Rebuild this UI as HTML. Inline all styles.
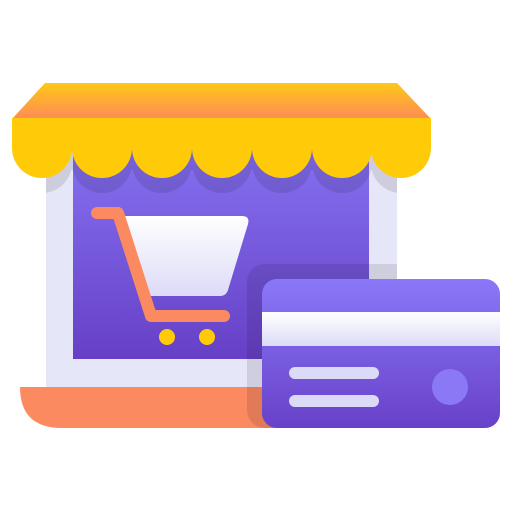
<!DOCTYPE html>
<html><head><style>html,body{margin:0;padding:0;background:#fff;width:512px;height:512px;overflow:hidden}</style></head>
<body>
<svg width="512" height="512" viewBox="0 0 512 512" xmlns="http://www.w3.org/2000/svg">
<defs>
<linearGradient id="aw" x1="0" y1="0" x2="0" y2="1"><stop offset="0" stop-color="#ffc815"/><stop offset="1" stop-color="#fd8b58"/></linearGradient>
<linearGradient id="scr" x1="0" y1="0" x2="0" y2="1"><stop offset="0" stop-color="#8570f0"/><stop offset="1" stop-color="#6640c6"/></linearGradient>
<linearGradient id="card" x1="0" y1="0" x2="0" y2="1"><stop offset="0" stop-color="#8a78f8"/><stop offset="1" stop-color="#6841c8"/></linearGradient>
<linearGradient id="wh" x1="0" y1="0" x2="0" y2="1"><stop offset="0" stop-color="#ffffff"/><stop offset="1" stop-color="#dcdbf7"/></linearGradient>
<clipPath id="fr"><rect x="0" y="150" width="397" height="290"/></clipPath>
</defs>
<rect x="46" y="150" width="351" height="237" fill="#e6e6f9"/>
<rect x="73" y="150" width="296" height="209" fill="url(#scr)"/>
<g fill="#000" opacity="0.1">
<rect x="46" y="150" width="351" height="20"/>
<circle cx="42" cy="163" r="30"/><circle cx="102" cy="163" r="30"/><circle cx="162" cy="163" r="30"/><circle cx="222" cy="163" r="30"/><circle cx="282" cy="163" r="30"/><circle cx="342" cy="163" r="30"/><circle cx="401" cy="163" r="30"/>
</g>
<rect x="0" y="150" width="46" height="50" fill="#fff"/>
<rect x="397" y="150" width="60" height="50" fill="#fff"/>
<path d="M45 83 H397 L431 119 H12 Z" fill="url(#aw)"/>
<rect x="12" y="118" width="419" height="32" fill="#ffcb08"/>
<g fill="#ffcb08">
<circle cx="42" cy="148" r="30"/><circle cx="102" cy="148" r="30"/><circle cx="162" cy="148" r="30"/><circle cx="222" cy="148" r="30"/><circle cx="282" cy="148" r="30"/><circle cx="342" cy="148" r="30"/><circle cx="401" cy="148" r="30"/>
</g>
<path d="M127 216 H242 Q250 216 248 224 L228 290 Q226 296 220 296 H150 L125 216 Z" fill="url(#wh)"/>
<path d="M97 213 H118 L151 316 H224" fill="none" stroke="#fb8a61" stroke-width="12" stroke-linecap="round" stroke-linejoin="round"/>
<circle cx="167" cy="337" r="8" fill="#ffcb08"/><circle cx="207" cy="337" r="8" fill="#ffcb08"/>
<path d="M20 387 H397 V428 H62 Q20 428 20 387 Z" fill="#fb8a61"/>
<rect x="247" y="264" width="200" height="164" rx="18" fill="#000" opacity="0.1" clip-path="url(#fr)"/>
<rect x="262" y="279" width="238" height="149" rx="15" fill="url(#card)"/>
<rect x="262" y="312" width="238" height="34" fill="url(#wh)"/>
<rect x="289" y="367" width="90" height="12" rx="6" fill="#dcdbf7"/>
<rect x="289" y="395" width="90" height="12" rx="6" fill="#dcdbf7"/>
<circle cx="450" cy="387" r="18" fill="#8a78f5"/>
</svg>
</body></html>
